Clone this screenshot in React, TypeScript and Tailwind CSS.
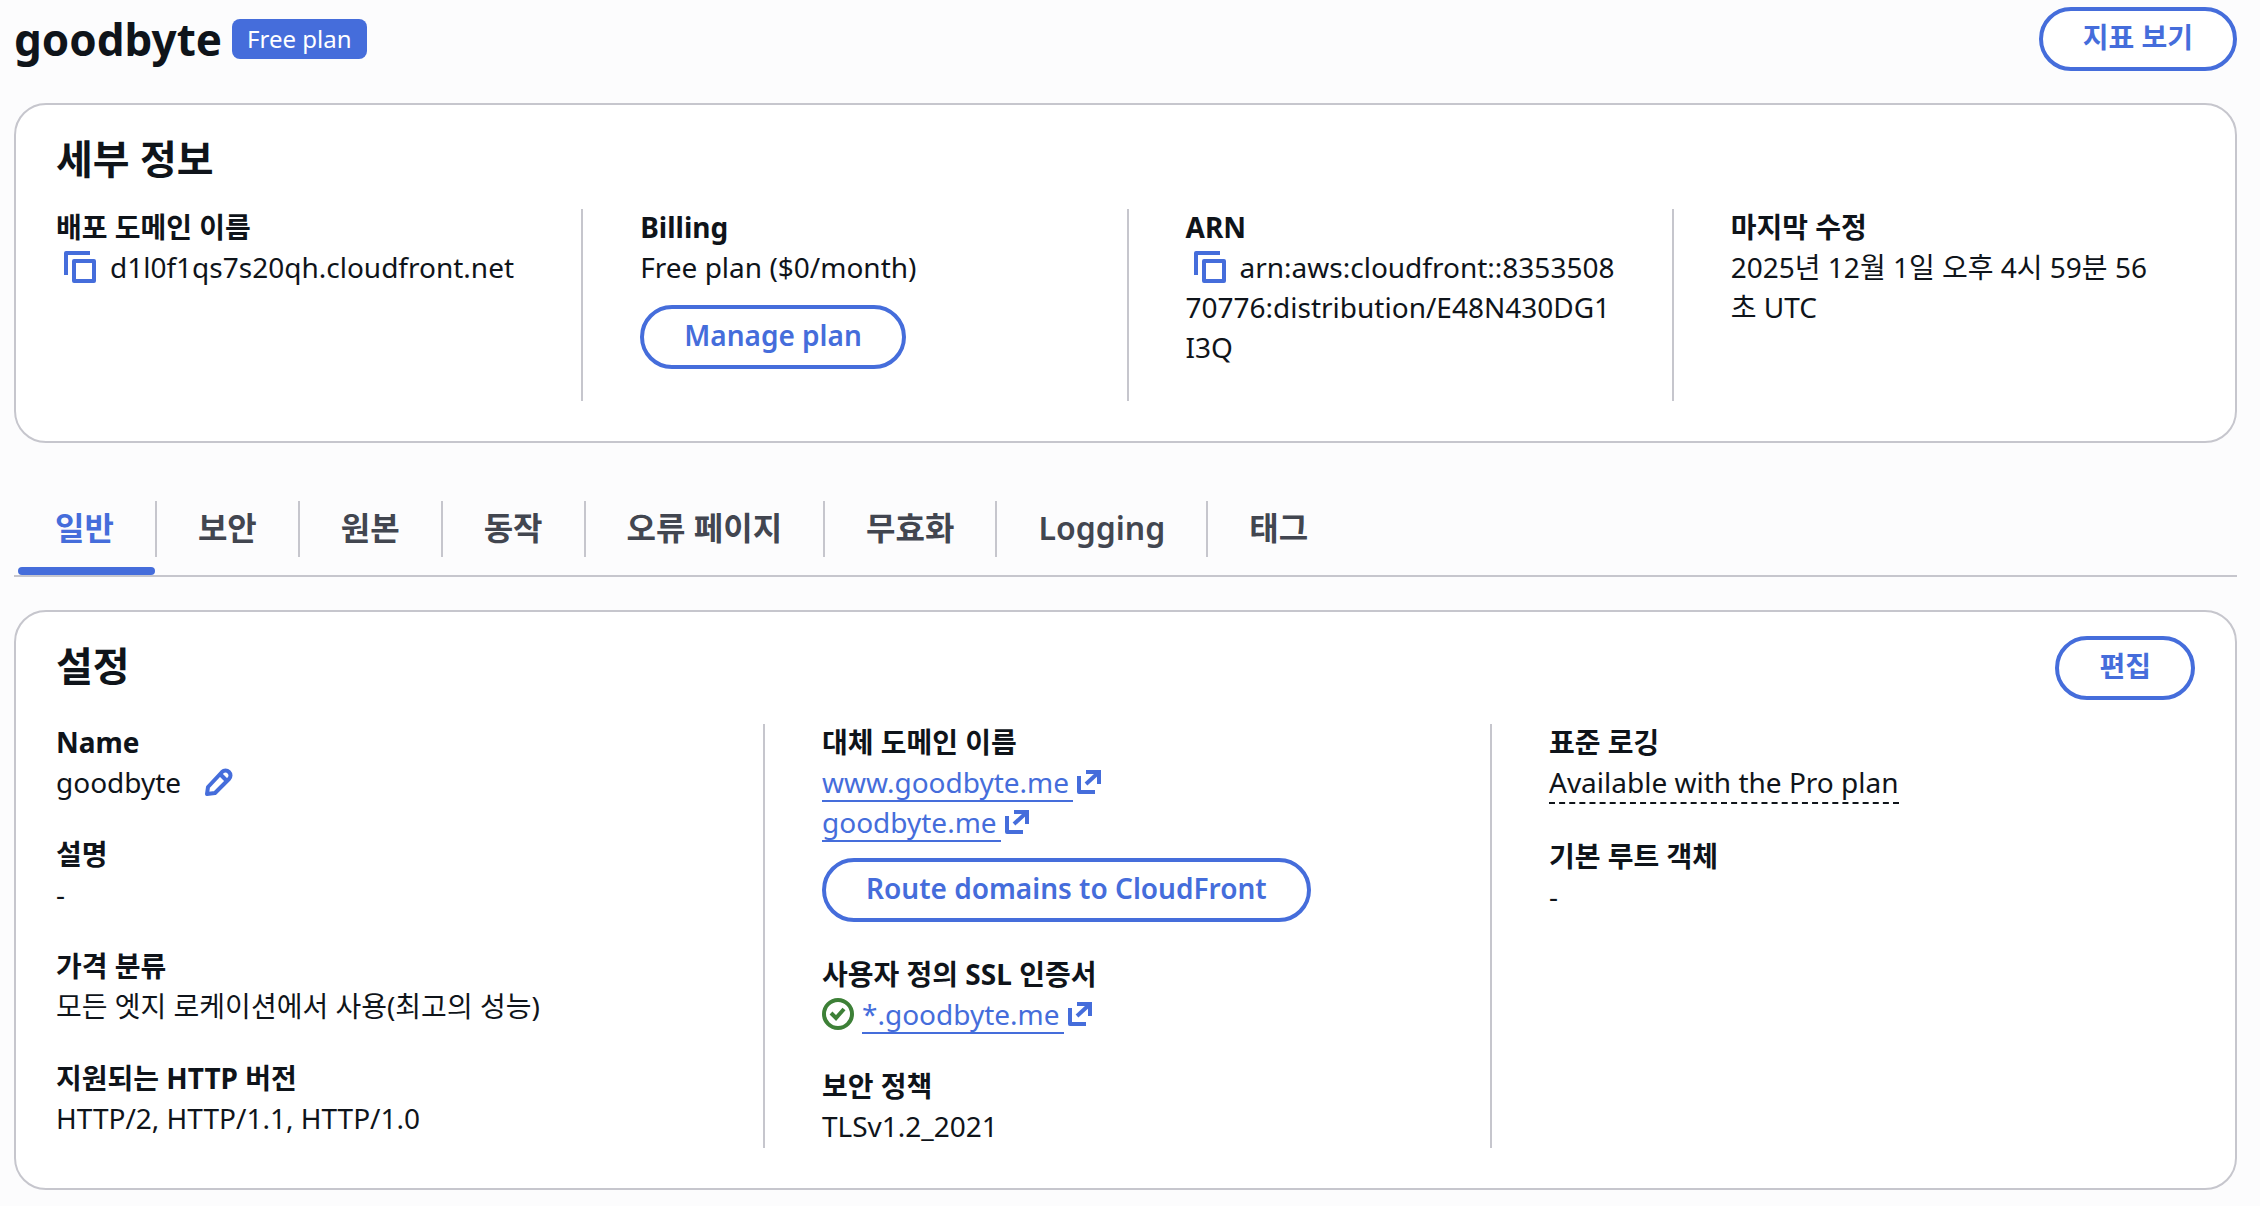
import { ReactNode, useState } from 'react';

const tabs = ['일반', '보안', '원본', '동작', '오류 페이지', '무효화', 'Logging', '태그'];

function CopyIcon() {
  return (
    <svg viewBox="0 0 32 32" className="w-8 h-8" fill="none" stroke="currentColor" strokeWidth="4" strokeLinejoin="round">
      <path d="M2 24V2h24" />
      <rect x="10" y="10" width="20" height="20" />
    </svg>
  );
}

function EditIcon() {
  return (
    <svg viewBox="0 0 28 28" className="w-7 h-7" fill="none" stroke="currentColor" strokeWidth="4" strokeLinejoin="round">
      <path d="M2 26l1-7L17 4c2-2 5-2 7 0s2 5 0 7L10 25z" />
      <path d="M15 6l7 7" />
    </svg>
  );
}

function ExternalIcon() {
  return (
    <svg viewBox="0 0 24 24" className="w-6 h-6" fill="none" stroke="currentColor" strokeWidth="4">
      <path d="M2 6v16h16" strokeLinejoin="round" />
      <path d="M9 2h13v12" />
      <path d="M9 14L21 3" />
    </svg>
  );
}

function CheckIcon() {
  return (
    <svg viewBox="0 0 32 32" className="w-8 h-8 text-[#3d8037]" fill="none" stroke="currentColor" strokeWidth="4">
      <circle cx="16" cy="16" r="14" />
      <path d="M9 15l5 5 8-9" />
    </svg>
  );
}

function Button({ children }: { children: ReactNode }) {
  return (
    <button
      type="button"
      className="h-16 px-10 pb-1 border-4 border-[#456ddb] rounded-full bg-white text-[#456ddb] font-semibold hover:bg-blue-50"
    >
      {children}
    </button>
  );
}

function DomainLink({ children }: { children: string }) {
  return (
    <a href="#" className="inline-flex items-center gap-1 align-top text-[#456ddb]">
      <span className="h-10 pr-1 border-b-2 border-[#456ddb]">{children}</span>
      <ExternalIcon />
    </a>
  );
}

function Field({ label, children }: { label: string; children: ReactNode }) {
  return (
    <div>
      <dt className="font-bold">{label}</dt>
      <dd>{children}</dd>
    </div>
  );
}

function Column({ children }: { children: ReactNode }) {
  return (
    <div className="pl-[57px] pr-[54px] border-l-2 border-[#c6c6cd] first:pl-5 first:border-l-0">
      <dl className="flex flex-col gap-8 -mt-0.5 mb-0.5">{children}</dl>
    </div>
  );
}

function Card({ children }: { children: ReactNode }) {
  return (
    <section className="border-2 border-[#c6c6cd] rounded-[32px] bg-white pt-6 pb-10">
      {children}
    </section>
  );
}

export default function App() {
  const [activeTab, setActiveTab] = useState('일반');

  return (
    <div className="min-h-screen bg-[#fcfcfd] pl-[14px] pr-[23px] pt-[7px] pb-4 font-['Noto_Sans','Noto_Sans_CJK_KR',sans-serif] text-[28px] leading-10 text-[#0f141a]">
      <header className="flex items-center justify-between mb-8">
        <div className="flex items-center gap-2.5">
          <h1 className="text-[44px] leading-[60px] font-bold">goodbyte</h1>
          <span className="h-10 px-[15px] rounded-lg bg-[#456ddb] text-white text-2xl leading-10">Free plan</span>
        </div>
        <Button>지표 보기</Button>
      </header>

      <Card>
        <h2 className="px-10 pt-1.5 pb-0.5 mb-6 text-[40px] leading-[48px] font-bold">세부 정보</h2>
        <div className="grid grid-cols-4 pl-5 pr-[18px]">
          <Column>
            <Field label="배포 도메인 이름">
              <span className="flex items-center">
                <button type="button" aria-label="Copy domain" className="ml-2 mr-3.5 text-[#456ddb]">
                  <CopyIcon />
                </button>
                d1l0f1qs7s20qh.cloudfront.net
              </span>
            </Field>
          </Column>
          <Column>
            <Field label="Billing">
              <p className="mb-[18px]">Free plan ($0/month)</p>
              <Button>Manage plan</Button>
            </Field>
          </Column>
          <Column>
            <div className="pb-8">
              <Field label="ARN">
                <span className="break-all">
                  <button type="button" aria-label="Copy ARN" className="ml-2 mr-3.5 -mt-1 mb-1 h-8 align-middle text-[#456ddb]">
                    <CopyIcon />
                  </button>
                  arn:aws:cloudfront::835350870776:distribution/E48N430DG1I3Q
                </span>
              </Field>
            </div>
          </Column>
          <Column>
            <Field label="마지막 수정">
              <span className="break-all">2025년 12월 1일 오후 4시 59분 56초 UTC</span>
            </Field>
          </Column>
        </div>
      </Card>

      <div role="tablist" className="flex mt-[58px] mb-[33px] border-b-2 border-[#c6c6cd] text-[32px] font-semibold">
        {tabs.map((tab, index) => (
          <button
            key={tab}
            type="button"
            role="tab"
            aria-selected={tab === activeTab}
            onClick={() => setActiveTab(tab)}
            className={tab === activeTab ? 'text-[#456ddb]' : 'text-[#424650] hover:text-[#456ddb]'}
          >
            <span
              className={`block h-14 px-[41px] leading-[54px] ${index < tabs.length - 1 ? 'border-r-2 border-[#c6c6cd]' : ''}`}
            >
              {tab}
            </span>
            <span className={`block h-2 mt-[10px] ml-1 mr-0.5 rounded ${tab === activeTab ? 'bg-[#456ddb]' : ''}`} />
          </button>
        ))}
      </div>

      <Card>
        <div className="flex items-center justify-between px-10 mb-6">
          <h2 className="pb-1 text-[40px] leading-[48px] font-bold">설정</h2>
          <Button>편집</Button>
        </div>
        <div className="grid grid-cols-3 pl-5 pr-[18px]">
          <Column>
            <Field label="Name">
              <span className="flex items-center gap-6">
                goodbyte
                <button type="button" aria-label="Edit name" className="text-[#456ddb]">
                  <EditIcon />
                </button>
              </span>
            </Field>
            <Field label="설명">-</Field>
            <Field label="가격 분류">모든 엣지 로케이션에서 사용(최고의 성능)</Field>
            <Field label="지원되는 HTTP 버전">HTTP/2, HTTP/1.1, HTTP/1.0</Field>
          </Column>
          <Column>
            <Field label="대체 도메인 이름">
              <span className="flex flex-col items-start mb-4">
                <DomainLink>www.goodbyte.me</DomainLink>
                <DomainLink>goodbyte.me</DomainLink>
              </span>
              <Button>Route domains to CloudFront</Button>
            </Field>
            <Field label="사용자 정의 SSL 인증서">
              <span className="flex items-center gap-2">
                <CheckIcon />
                <DomainLink>*.goodbyte.me</DomainLink>
              </span>
            </Field>
            <Field label="보안 정책">TLSv1.2_2021</Field>
          </Column>
          <Column>
            <Field label="표준 로깅">
              <span className="inline-block align-top border-b-2 border-dashed border-[#0f141a]">
                Available with the Pro plan
              </span>
            </Field>
            <Field label="기본 루트 객체">-</Field>
          </Column>
        </div>
      </Card>
    </div>
  );
}
